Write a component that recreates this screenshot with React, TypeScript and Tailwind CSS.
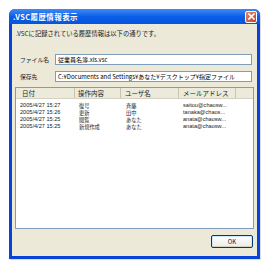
import React from 'react'

const jp = { fontFamily: '"Noto Sans CJK JP", "Liberation Sans", sans-serif' }

const rows = [
  { date: '2005/4/27 15:27', op: '復号', user: '斉藤', mail: 'saitou@chaosw...' },
  { date: '2005/4/27 15:26', op: '更新', user: '田中', mail: 'tanaka@chaos...' },
  { date: '2005/4/27 15:25', op: '閲覧', user: 'あなた', mail: 'anata@chaosw...' },
  { date: '2005/4/27 15:25', op: '新規作成', user: 'あなた', mail: 'anata@chaosw...' },
]

function Field({ label, value }: { label: string; value: string }) {
  return (
    <div className="flex items-center h-[11px]">
      <span className="w-[40px] pl-[5px] whitespace-nowrap text-[5.8px] leading-none text-[#222]">{label}</span>
      <div className="flex-1 h-[11px] border border-[#7f9db9] bg-white flex items-center px-[2px] overflow-hidden whitespace-nowrap text-[6px] leading-none text-black">
        {value}
      </div>
    </div>
  )
}

export default function App() {
  return (
    <div className="w-[267px] h-[267px] bg-white pt-[9px] pl-[9px]" style={jp}>
      <div className="w-[251px] h-[250px] flex flex-col rounded-t-[6px] bg-[#0842d6] shadow-[1px_1px_1px_rgba(0,0,0,0.15)]">
        {/* Title bar */}
        <div className="h-[15px] flex items-center justify-between pl-[4px] pr-[3px] rounded-t-[6px] bg-gradient-to-b from-[#3d8bf8] via-[#0a5ee8] to-[#0654dc]">
          <span className="text-[7.5px] font-bold text-white leading-none tracking-[0.4px]">.VSC履歴情報表示</span>
          <div className="w-[12px] h-[12px] rounded-[2px] border border-white bg-gradient-to-br from-[#e9846c] to-[#c8401a] flex items-center justify-center">
            <svg width="7" height="7" viewBox="0 0 7 7">
              <path d="M1 1L6 6M6 1L1 6" stroke="white" strokeWidth="1.6" strokeLinecap="square" />
            </svg>
          </div>
        </div>

        {/* Body */}
        <div className="flex-1 mx-[3px] mb-[3px] bg-[#ece9d8] flex flex-col px-[3px]">
          <div className="pt-[7px] pl-[1px] text-[6.3px] leading-none text-[#222] whitespace-nowrap">
            .VSCに記録されている履歴情報は以下の通りです。
          </div>

          <div className="mt-[17px] flex flex-col gap-[6px] pr-[2px]">
            <Field label="ファイル名" value="従業員名簿.xls.vsc" />
            <Field label="保存先" value="C:¥Documents and Settings¥あなた¥デスクトップ¥指定ファイル" />
          </div>

          {/* List view */}
          <div className="mt-[5px] h-[142px] border border-[#7f9db9] bg-white flex flex-col">
            <div className="h-[11px] flex bg-[#ebeadb] border-b border-[#d6d2c2] text-[6.5px] leading-none text-[#222]">
              <div className="w-[59px] pl-[6px] flex items-center border-r border-[#c7c5b2]">日付</div>
              <div className="w-[46px] pl-[3px] flex items-center border-r border-[#c7c5b2]">操作内容</div>
              <div className="w-[58px] pl-[4px] flex items-center border-r border-[#c7c5b2]">ユーザ名</div>
              <div className="w-[57px] pl-[4px] flex items-center border-r border-[#c7c5b2]">メールアドレス</div>
              <div className="flex-1" />
            </div>
            <div className="pt-[3px] flex flex-col text-[#222]">
              {rows.map((r, i) => (
                <div key={i} className="flex h-[7px] items-center leading-[7px] whitespace-nowrap">
                  <div className="w-[59px] pl-[4px] text-[5.6px] font-['Liberation_Sans',sans-serif]">{r.date}</div>
                  <div className="w-[46px] pl-[4px] text-[5.2px]">{r.op}</div>
                  <div className="w-[58px] pl-[5px] text-[5.2px]">{r.user}</div>
                  <div className="w-[57px] pl-[4px] text-[5.6px] font-['Liberation_Sans',sans-serif]">{r.mail}</div>
                </div>
              ))}
            </div>
          </div>

          <div className="flex justify-end mt-[6px] pr-[1px]">
            <button className="w-[42px] h-[13px] rounded-[2px] border border-[#003c74] bg-gradient-to-b from-white to-[#ecebe6] shadow-[inset_0_-1px_0_#d6d0c5,inset_0_0_0_1px_#cee7ff] text-[6px] leading-none text-[#222]">
              OK
            </button>
          </div>
        </div>
      </div>
    </div>
  )
}
